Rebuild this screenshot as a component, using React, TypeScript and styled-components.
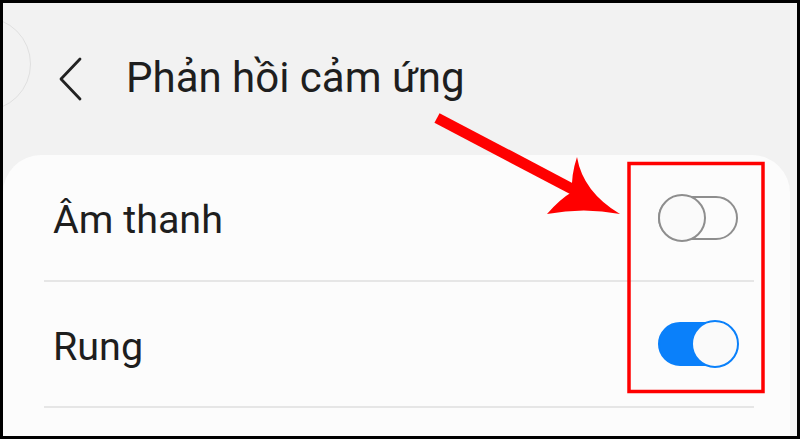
import styled, { createGlobalStyle } from 'styled-components';

const Global = createGlobalStyle`
  html, body {
    margin: 0;
    padding: 0;
    background: #000;
  }
  body {
    font-family: Roboto, "Noto Sans", "Liberation Sans", sans-serif;
  }
`;

const Frame = styled.div`
  position: relative;
  width: 800px;
  height: 439px;
  box-sizing: border-box;
  border: 3px solid #000;
  background: #f2f2f2;
  overflow: hidden;
  display: flex;
  flex-direction: column;
`;

const Header = styled.div`
  height: 152px;
  flex-shrink: 0;
  display: flex;
  align-items: center;
  padding-left: 54px;
  gap: 41px;
`;

// faded ripple left over from a previous tap, partly off screen
const Ripple = styled.div`
  position: absolute;
  left: -66px;
  top: 14px;
  width: 92px;
  height: 92px;
  border-radius: 50%;
  border: 1.5px solid #e0e0e0;
`;

const BackButton = styled.div`
  width: 28px;
  height: 44px;
  display: flex;
  align-items: center;
`;

const Title = styled.h1`
  margin: 0;
  font-size: 42px;
  font-weight: 400;
  color: #1e1e1e;
  padding-bottom: 4px;
`;

const Card = styled.div`
  flex: 1;
  margin-right: 7px;
  background: #fcfcfc;
  border-radius: 38px 38px 0 0;
`;

const Row = styled.div<{ $h: number }>`
  height: ${(p) => p.$h}px;
  margin: 0 36px 0 41px;
  padding: 0 16px 0 9px;
  display: flex;
  align-items: center;
  justify-content: space-between;
  border-bottom: 2px solid #e6e6e6;
`;

const Label = styled.span`
  font-size: 39.5px;
  color: #1e1e1e;
  padding-top: 4px;
`;

const Track = styled.div<{ $on: boolean }>`
  position: relative;
  width: 80px;
  height: 44px;
  box-sizing: border-box;
  border-radius: 22px;
  border: 2px solid ${(p) => (p.$on ? '#0a80fa' : '#8e8e8e')};
  background: ${(p) => (p.$on ? '#0a80fa' : '#fcfcfc')};
`;

const Thumb = styled.div<{ $on: boolean }>`
  position: absolute;
  top: -4px;
  ${(p) => (p.$on ? 'right: -3px;' : 'left: -2px;')}
  width: 48px;
  height: 48px;
  box-sizing: border-box;
  border-radius: 50%;
  background: #fafafa;
  border: 2px solid ${(p) => (p.$on ? '#0a80fa' : '#8e8e8e')};
`;

const Overlay = styled.svg`
  position: absolute;
  left: -3px;
  top: -3px;
  width: 800px;
  height: 439px;
  pointer-events: none;
`;

function Toggle({ on }: { on: boolean }) {
  return (
    <Track $on={on}>
      <Thumb $on={on} />
    </Track>
  );
}

export default function App() {
  return (
    <>
      <Global />
      <Frame>
        <Ripple />
        <Header>
          <BackButton>
            <svg width="28" height="44" viewBox="0 0 28 44">
              <path d="M23 2 L4 22 L23 42" fill="none" stroke="#222" strokeWidth="2.8" strokeLinecap="round" strokeLinejoin="round" />
            </svg>
          </BackButton>
          <Title>Phản hồi cảm ứng</Title>
        </Header>
        <Card>
          <Row $h={125}>
            <Label>Âm thanh</Label>
            <Toggle on={false} />
          </Row>
          <Row $h={124}>
            <Label>Rung</Label>
            <Toggle on={true} />
          </Row>
        </Card>
        <Overlay viewBox="0 0 800 439">
          <rect x="629" y="163.5" width="134" height="228" fill="none" stroke="#ff0000" strokeWidth="3.5" />
          <line x1="437" y1="118" x2="574" y2="190" stroke="#ff0000" strokeWidth="11" />
          <path
            d="M577 157 Q583 192 620 214 Q584 207 547 214 Q560 199 572 192 Q571 175 577 157 Z"
            fill="#ff0000"
          />
        </Overlay>
      </Frame>
    </>
  );
}
